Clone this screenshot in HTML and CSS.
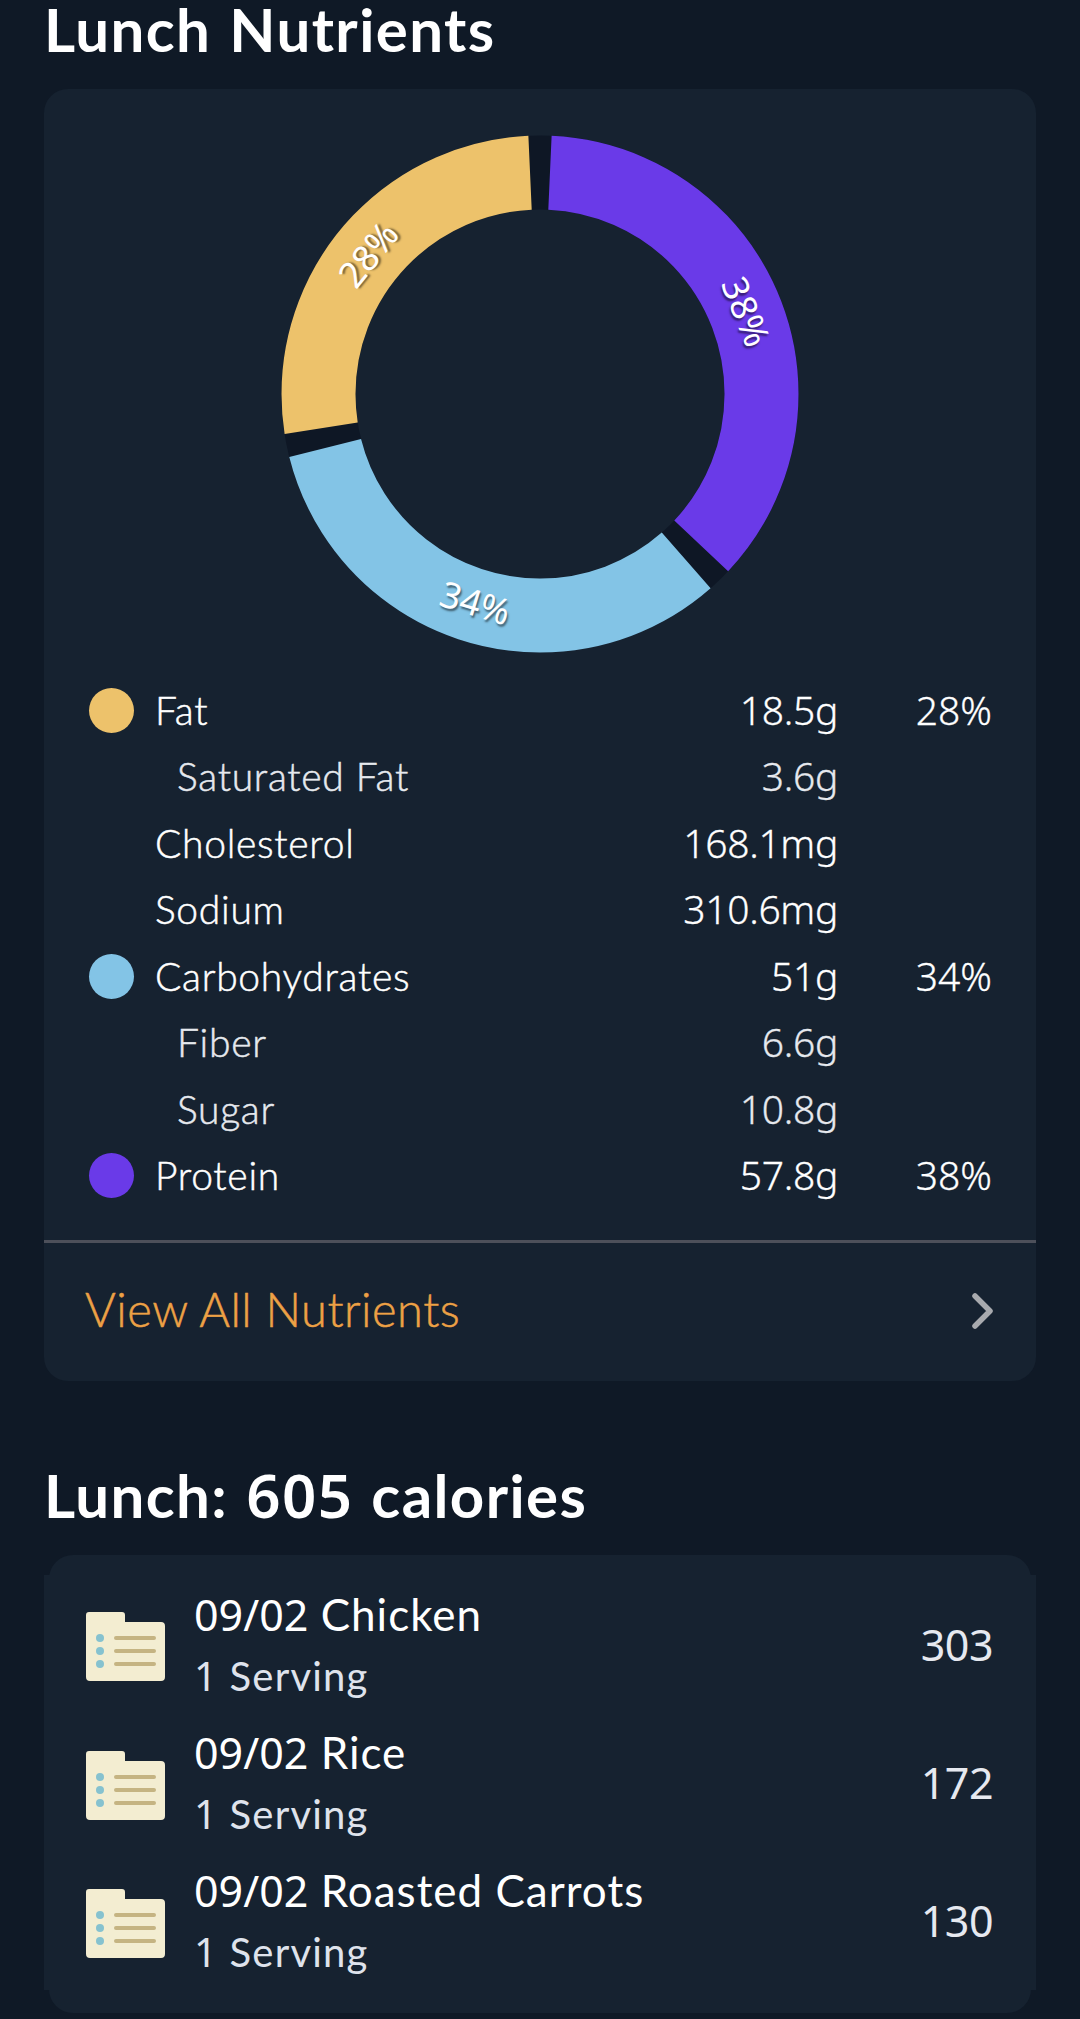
FILE: index.html
```html
<!DOCTYPE html>
<html lang="en">

<head>
  <meta charset="UTF-8">
  <meta name="viewport" content="width=device-width, initial-scale=1.0">
  <title>Lunch Nutrients</title>
  <link rel="stylesheet" href="styles.css">
</head>

<body>
  <h1>Lunch Nutrients</h1>
  <section class="card">
    <svg class="donut" viewBox="0 0 518 518">
      <circle class="ring gap" cx="259" cy="259" r="221.5" />
      <g transform="rotate(-90 259 259)">
        <circle class="ring protein" cx="259" cy="259" r="221.5" pathLength="360" stroke-dasharray="130.7 229.3" stroke-dashoffset="-2.6" />
        <circle class="ring carbs" cx="259" cy="259" r="221.5" pathLength="360" stroke-dasharray="117.2 242.8" stroke-dashoffset="-138.7" />
        <circle class="ring fat" cx="259" cy="259" r="221.5" pathLength="360" stroke-dasharray="96.3 263.7" stroke-dashoffset="-261.1" />
      </g>
      <text class="percent" transform="translate(464 177) rotate(68)" y="12">38%</text>
      <text class="percent" transform="translate(194 469) rotate(17)" y="12">34%</text>
      <text class="percent" transform="translate(88 120) rotate(-51)" y="12">28%</text>
    </svg>

    <ul class="nutrients">
      <li><span class="dot fat"></span><span class="name">Fat</span><span class="amount">18.5g</span><span class="share">28%</span></li>
      <li class="sub"><span class="name">Saturated Fat</span><span class="amount">3.6g</span></li>
      <li><span class="name">Cholesterol</span><span class="amount">168.1mg</span></li>
      <li><span class="name">Sodium</span><span class="amount">310.6mg</span></li>
      <li><span class="dot carbs"></span><span class="name">Carbohydrates</span><span class="amount">51g</span><span class="share">34%</span></li>
      <li class="sub"><span class="name">Fiber</span><span class="amount">6.6g</span></li>
      <li class="sub"><span class="name">Sugar</span><span class="amount">10.8g</span></li>
      <li><span class="dot protein"></span><span class="name">Protein</span><span class="amount">57.8g</span><span class="share">38%</span></li>
    </ul>

    <a class="view-all">
      <span class="link-text">View All Nutrients</span>
      <svg class="chevron" viewBox="0 0 24 38">
        <path d="M4 4 L19 19 L4 34" />
      </svg>
    </a>
  </section>

  <h1 class="meal-title">Lunch: <span class="num">605</span> calories</h1>
  <section class="meal">
    <ul class="foods">
      <li>
        <svg class="folder" viewBox="0 0 79 69">
          <path class="paper" d="M3 0H36Q39 0 39 3V10H75Q79 10 79 14V65Q79 69 75 69H4Q0 69 0 65V3Q0 0 3 0Z" />
          <g class="bullets"><circle cx="14" cy="26" r="4" /><circle cx="14" cy="39" r="4" /><circle cx="14" cy="52" r="4" /></g>
          <path class="lines" d="M30 26H68M30 39H68M30 52H68" />
        </svg>
        <div class="food">
          <p class="title"><span class="num">09/02</span> Chicken</p>
          <p class="serving"><span class="num">1</span> Serving</p>
        </div>
        <span class="calories">303</span>
      </li>
      <li>
        <svg class="folder" viewBox="0 0 79 69">
          <path class="paper" d="M3 0H36Q39 0 39 3V10H75Q79 10 79 14V65Q79 69 75 69H4Q0 69 0 65V3Q0 0 3 0Z" />
          <g class="bullets"><circle cx="14" cy="26" r="4" /><circle cx="14" cy="39" r="4" /><circle cx="14" cy="52" r="4" /></g>
          <path class="lines" d="M30 26H68M30 39H68M30 52H68" />
        </svg>
        <div class="food">
          <p class="title"><span class="num">09/02</span> Rice</p>
          <p class="serving"><span class="num">1</span> Serving</p>
        </div>
        <span class="calories">172</span>
      </li>
      <li>
        <svg class="folder" viewBox="0 0 79 69">
          <path class="paper" d="M3 0H36Q39 0 39 3V10H75Q79 10 79 14V65Q79 69 75 69H4Q0 69 0 65V3Q0 0 3 0Z" />
          <g class="bullets"><circle cx="14" cy="26" r="4" /><circle cx="14" cy="39" r="4" /><circle cx="14" cy="52" r="4" /></g>
          <path class="lines" d="M30 26H68M30 39H68M30 52H68" />
        </svg>
        <div class="food">
          <p class="title"><span class="num">09/02</span> Roasted Carrots</p>
          <p class="serving"><span class="num">1</span> Serving</p>
        </div>
        <span class="calories">130</span>
      </li>
    </ul>
  </section>
</body>

</html>
```
FILE: styles.css
```css
:root {
  --bg-color: #0f1926;
  --card-color: #162230;
  --fat: #edc26b;
  --carbs: #83c4e6;
  --protein: #6a3ae8;
}

* {
  box-sizing: border-box;
}

body {
  background-color: var(--bg-color);
  color: #fff;
  font-family: Lato, sans-serif;
  margin: 0;
  padding: 0 44px;
}

h1 {
  font-size: 60px;
  font-weight: 700;
  letter-spacing: 1.4px;
  line-height: 58px;
  margin: 0 0 31px;
  word-spacing: 2px;
}

ul {
  list-style: none;
  margin: 0;
  padding: 0;
}

p {
  margin: 0;
}

.num,
.amount,
.share,
.calories,
.percent {
  font-family: "Noto Sans", sans-serif;
}

h1 .num {
  font-weight: 600;
}

.card {
  background-color: var(--card-color);
  border-radius: 24px;
  padding-top: 45.5px;
}

.donut {
  display: block;
  height: 518px;
  margin: 0 auto;
  width: 518px;
}

.ring {
  fill: none;
  stroke-width: 74;
}

.ring.gap {
  stroke: #0e1725;
}

.ring.fat {
  stroke: var(--fat);
}

.ring.carbs {
  stroke: var(--carbs);
}

.ring.protein {
  stroke: var(--protein);
}

.percent {
  fill: #fff;
  font-size: 36px;
  text-anchor: middle;
  text-shadow: 2px 2px 2px rgba(0, 0, 0, 0.5);
}

.nutrients {
  border-bottom: 3px solid #4d505a;
  font-size: 39px;
  font-weight: 300;
  padding: 24px 44px 31.5px;
}

.nutrients li {
  align-items: center;
  display: grid;
  grid-template-columns: 67px 1fr 200px 154px;
  height: 66.5px;
  line-height: 66px;
}

.name {
  -webkit-text-stroke: 0.5px currentColor;
  grid-column: 2;
  letter-spacing: 0.7px;
}

.sub {
  color: #e6e9ee;
}

.sub .name {
  padding-left: 22px;
}

.amount,
.share {
  -webkit-text-stroke: 0.3px currentColor;
  text-align: right;
}

.amount {
  letter-spacing: -0.3px;
}

.dot {
  border-radius: 50%;
  height: 45px;
  margin: 1px 0 0 0.5px;
  width: 45px;
}

.dot.fat {
  background-color: var(--fat);
}

.dot.carbs {
  background-color: var(--carbs);
}

.dot.protein {
  background-color: var(--protein);
}

.view-all {
  -webkit-text-stroke: 0.5px currentColor;
  align-items: center;
  color: #eda145;
  display: flex;
  font-size: 47px;
  font-weight: 300;
  height: 138px;
  justify-content: space-between;
  letter-spacing: 0.5px;
  padding: 0 41px 2px;
}

.link-text {
  padding-bottom: 4px;
}

.chevron {
  fill: none;
  height: 38px;
  stroke: #a8aaae;
  stroke-linecap: round;
  stroke-linejoin: round;
  stroke-width: 5.5;
  width: 24px;
}

.meal-title {
  margin-top: 85px;
}

.meal {
  background-color: var(--card-color);
  border-radius: 24px;
  margin: 0 5px;
  padding: 20px 0 23px;
}

.foods {
  background-color: var(--card-color);
  margin: 0 -5px;
}

.foods li {
  align-items: center;
  display: flex;
  height: 138.4px;
  padding: 0 43px 0 42px;
}

.folder {
  height: 69px;
  margin-top: 5px;
  width: 79px;
}

.paper {
  fill: #f3edd1;
}

.bullets {
  fill: #86c2cf;
}

.lines {
  stroke: #c5b482;
  stroke-linecap: round;
  stroke-width: 4;
}

.food {
  flex: 1;
  margin-left: 29px;
}

.title {
  font-size: 44px;
  letter-spacing: 1px;
  line-height: 62px;
}

.title .num {
  font-size: 43px;
  letter-spacing: 0;
}

.serving {
  color: #dfe3ec;
  font-size: 40px;
  letter-spacing: 1.2px;
  line-height: 60px;
}

.calories {
  color: #e6e9f0;
  font-size: 43px;
  letter-spacing: -0.5px;
}
```
